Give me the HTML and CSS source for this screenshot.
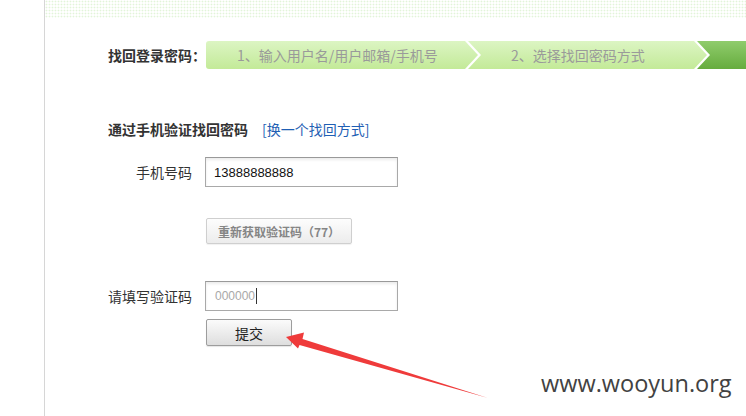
FILE: index.html
```html
<!DOCTYPE html>
<html lang="zh-CN">
<head>
<meta charset="utf-8">
<title>找回登录密码</title>
<link rel="stylesheet" href="styles.css">
</head>
<body>
<div class="page">
  <div class="dots"></div>
  <div class="content">
    <div class="steps-row">
      <div class="steps-title">找回登录密码：</div>
      <div class="steps">
        <div class="step step1">1、输入用户名/用户邮箱/手机号</div>
        <div class="step step2">2、选择找回密码方式</div>
        <div class="step step3"></div>
      </div>
    </div>

    <div class="section-head">
      <span class="section-title">通过手机验证找回密码</span>
      <a class="switch-link" href="#">[换一个找回方式]</a>
    </div>

    <div class="row row-phone">
      <label class="label">手机号码</label>
      <div class="input"><span class="value">13888888888</span></div>
    </div>

    <div class="row row-resend">
      <button class="btn btn-resend" type="button">重新获取验证码（77）</button>
    </div>

    <div class="row row-code">
      <label class="label">请填写验证码</label>
      <div class="input"><span class="placeholder">000000</span><span class="caret"></span></div>
    </div>

    <div class="row row-submit">
      <button class="btn btn-submit" type="button">提交</button>
    </div>
  </div>

  <svg class="arrow" width="220" height="80" viewBox="280 325 220 80" xmlns="http://www.w3.org/2000/svg">
    <polygon points="286,337 304,332.5 302.5,339 488,398 299.5,345 298,348.5" fill="#ef3b3b"/>
  </svg>
  <div class="watermark">www.wooyun.org</div>
</div>
</body>
</html>
```

FILE: styles.css
```css
html, body {
  margin: 0;
  padding: 0;
  background: #fff;
  overflow: hidden;
}
body {
  width: 746px;
  height: 416px;
  font-family: "Noto Sans CJK SC", "Noto Sans", sans-serif;
  color: #333;
}
.page {
  position: relative;
  margin-left: 44px;
  border-left: 1px solid #d6d6d6;
  height: 416px;
  overflow: hidden;
}
.dots {
  height: 18px;
  background-image: radial-gradient(circle, #e2f4d9 0.8px, transparent 1.1px);
  background-size: 3px 3px;
}
.content {
  padding-left: 63px;
}
.steps-row {
  display: flex;
  align-items: center;
  margin-top: 23px;
  height: 28px;
}
.steps-title {
  flex: none;
  white-space: nowrap;
  font-size: 14px;
  font-weight: bold;
  color: #333;
  width: 98px;
  line-height: 28px;
}
.steps {
  display: flex;
  flex: none;
  height: 28px;
}
.step {
  flex: none;
  height: 28px;
  line-height: 28px;
  font-size: 14px;
  color: #9a9a9a;
  white-space: nowrap;
  box-sizing: border-box;
  background: linear-gradient(#dcf5c3, #c3ea98);
}
.step1 {
  width: 272px;
  padding-left: 31px;
  border-radius: 3px 0 0 3px;
  clip-path: polygon(0 0, calc(100% - 13px) 0, 100% 50%, calc(100% - 13px) 100%, 0 100%);
}
.step2 {
  width: 239px;
  margin-left: -10px;
  padding-left: 43px;
  clip-path: polygon(0 0, calc(100% - 13px) 0, 100% 50%, calc(100% - 13px) 100%, 0 100%, 13px 50%);
}
.step3 {
  width: 49px;
  margin-left: -10px;
  background: linear-gradient(#90cc6c, #66ac3e);
  clip-path: polygon(0 0, 100% 0, 100% 100%, 0 100%, 13px 50%);
}
.section-head {
  display: flex;
  align-items: center;
  margin-top: 50px;
  height: 20px;
}
.section-title {
  font-size: 14px;
  font-weight: bold;
  color: #333;
}
.switch-link {
  margin-left: 14px;
  font-size: 14px;
  color: #1f5fb4;
  text-decoration: none;
}
.row {
  display: flex;
  align-items: center;
}
.label {
  width: 84px;
  margin-right: 13px;
  text-align: right;
  font-size: 14px;
  color: #333;
}
.input {
  width: 193px;
  height: 30px;
  box-sizing: border-box;
  border: 1px solid #a9a9a9;
  border-top-color: #999;
  box-shadow: inset 0 2px 3px rgba(0, 0, 0, 0.08);
  display: flex;
  align-items: center;
  padding-left: 8px;
  background: #fff;
}
.value {
  font-family: "Liberation Sans", Arial, sans-serif;
  font-size: 13px;
  color: #111;
}
.placeholder {
  font-family: "Liberation Sans", Arial, sans-serif;
  font-size: 12px;
  color: #a8a8a8;
  margin-left: 1px;
}
.caret {
  display: inline-block;
  width: 1px;
  height: 16px;
  background: #333;
  margin-left: 1px;
}
.row-phone {
  margin-top: 18px;
}
.row-resend {
  margin-top: 31px;
  padding-left: 98px;
}
.row-code {
  margin-top: 37px;
}
.row-submit {
  margin-top: 8px;
  padding-left: 98px;
}
.btn {
  font-family: "Noto Sans CJK SC", "Noto Sans", sans-serif;
  box-sizing: border-box;
  border-radius: 2px;
  padding: 0;
  cursor: pointer;
}
.btn-resend {
  width: 146px;
  height: 26px;
  font-size: 12px;
  font-weight: bold;
  color: #858585;
  border: 1px solid #cfcfcf;
  background: linear-gradient(#fdfdfd, #ececec);
  box-shadow: 0 1px 1px rgba(0, 0, 0, 0.06);
}
.btn-submit {
  width: 86px;
  height: 27px;
  font-size: 14px;
  color: #222;
  border: 1px solid #9d9d9d;
  background: linear-gradient(#fbfbfb, #dedede);
  box-shadow: 0 1px 1px rgba(0, 0, 0, 0.1);
}
.arrow {
  position: absolute;
  left: 235px;
  top: 325px;
}
.watermark {
  position: absolute;
  left: 496px;
  top: 367px;
  font-family: "Open Sans", "DejaVu Sans", sans-serif;
  font-size: 23.5px;
  color: #424242;
}
```
